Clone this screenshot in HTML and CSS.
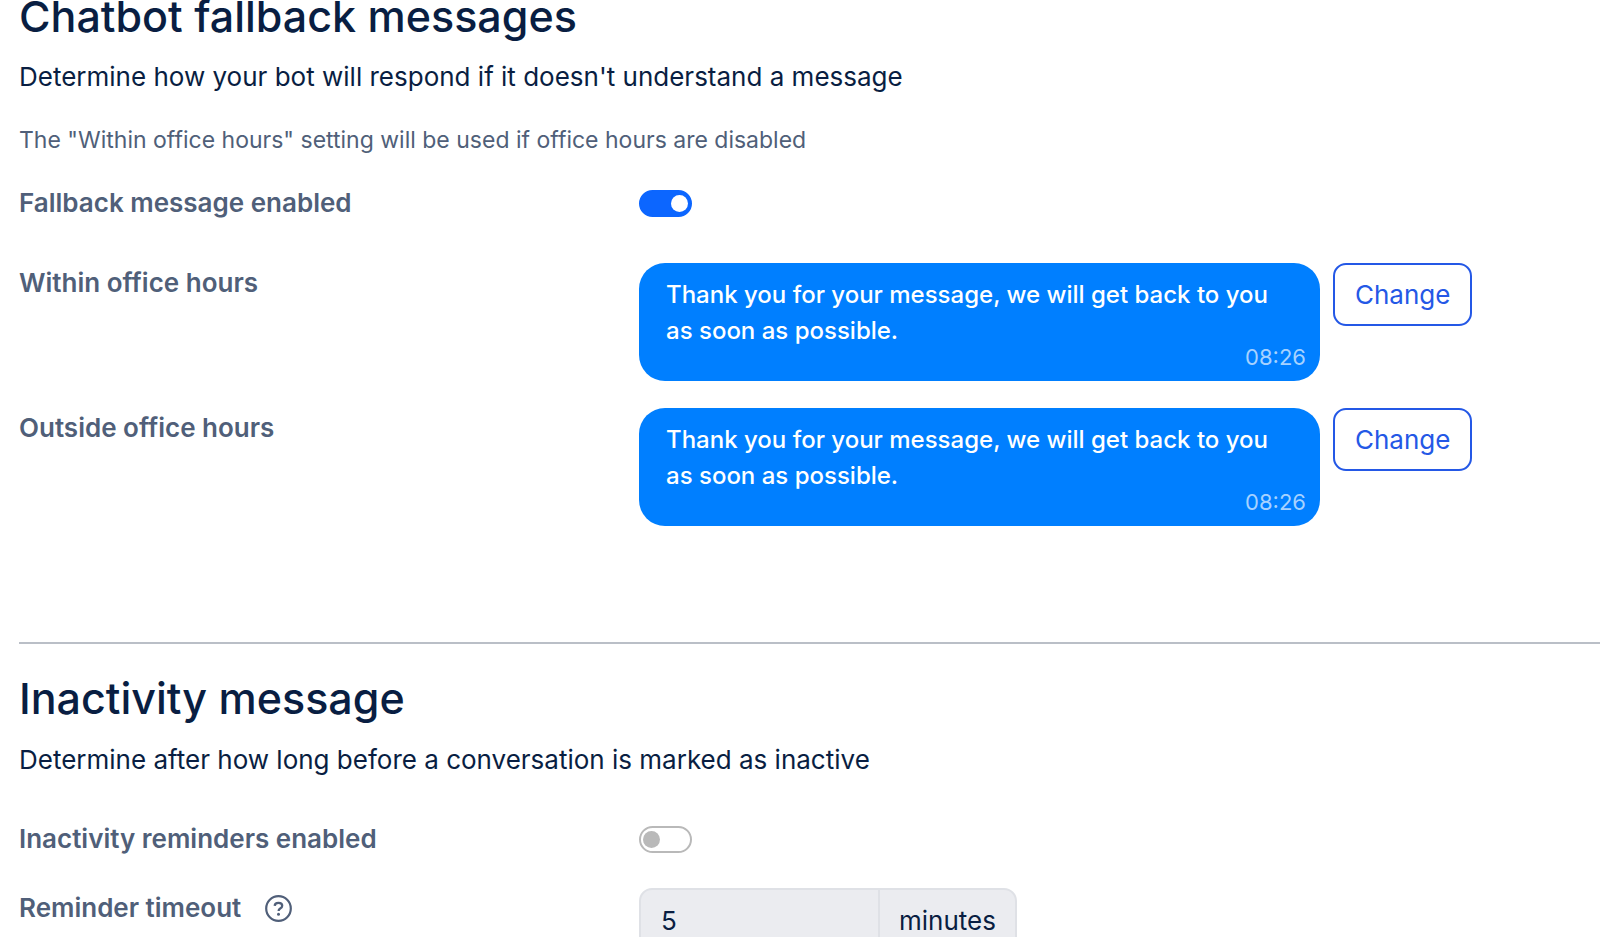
FILE: index.html
```html
<!DOCTYPE html>
<html lang="en">
<head>
<meta charset="utf-8">
<title>Chatbot settings</title>
<link rel="stylesheet" href="styles.css">
</head>
<body>
<main class="settings">
  <section class="section section-fallback">
    <h2 class="title">Chatbot fallback messages</h2>
    <p class="description">Determine how your bot will respond if it doesn't understand a message</p>
    <p class="note">The "Within office hours" setting will be used if office hours are disabled</p>
    <div class="row row-toggle">
      <label class="label" for="fallback">Fallback message enabled</label>
      <input class="toggle" id="fallback" type="checkbox" role="switch" checked>
    </div>
    <div class="row row-message">
      <span class="label">Within office hours</span>
      <div class="message">
        <div class="bubble">
          <p class="bubble-text">Thank you for your message, we will get back to you as soon as possible.</p>
          <time class="bubble-time">08:26</time>
        </div>
        <button class="change" type="button">Change</button>
      </div>
    </div>
    <div class="row row-message">
      <span class="label">Outside office hours</span>
      <div class="message">
        <div class="bubble">
          <p class="bubble-text">Thank you for your message, we will get back to you as soon as possible.</p>
          <time class="bubble-time">08:26</time>
        </div>
        <button class="change" type="button">Change</button>
      </div>
    </div>
  </section>
  <section class="section section-inactivity">
    <h2 class="title">Inactivity message</h2>
    <p class="description">Determine after how long before a conversation is marked as inactive</p>
    <div class="row row-toggle">
      <label class="label" for="inactivity">Inactivity reminders enabled</label>
      <input class="toggle" id="inactivity" type="checkbox" role="switch">
    </div>
    <div class="row row-timeout">
      <div class="label-group">
        <label class="label" for="timeout">Reminder timeout</label>
        <svg class="help" viewBox="0 0 27 27" fill="none" stroke="currentColor" aria-hidden="true">
          <circle cx="13.500" cy="13.500" r="12.300" stroke-width="2.200"/>
          <path d="M9.700 10.900C9.800 8.900 11.300 7.900 13.500 7.900c2.200 0 3.700 1.100 3.700 2.900 0 1.400-.8 2.100-2 2.800-1.200.7-1.600 1.200-1.600 2.300" stroke-width="2.300"/>
          <circle cx="13.500" cy="19.200" r="1.500" fill="currentColor" stroke="none"/>
        </svg>
      </div>
      <div class="duration">
        <input class="duration-value" id="timeout" type="text" value="5" disabled>
        <span class="duration-unit">minutes</span>
      </div>
    </div>
  </section>
</main>
</body>
</html>
```
FILE: styles.css
```css
* {
  box-sizing: border-box;
}

body {
  margin: 0;
  background: #fff;
  color: #091e42;
  font-family: Inter, "Liberation Sans", sans-serif;
  font-size: 26px;
  line-height: 36px;
  height: 100vh;
  overflow: hidden;
}

.settings {
  padding-left: 19px;
}

.title,
.description,
.note,
.bubble-text {
  margin: 0;
}

.title {
  font-size: 43px;
  font-weight: 500;
  line-height: 32px;
}

.description {
  margin-top: 27px;
}

.note {
  margin-top: 27px;
  color: #505f79;
  font-size: 23px;
}

.row {
  display: grid;
  grid-template-columns: 620px 1fr;
  align-items: start;
}

.row-toggle {
  align-items: center;
  margin-top: 27px;
}

.label {
  color: #505f79;
  font-weight: 600;
}

.toggle {
  appearance: none;
  display: flex;
  align-items: center;
  width: 53px;
  height: 27px;
  margin: 0;
  padding: 0 2px;
  border: 2px solid #b9b9b9;
  border-radius: 14px;
  background: #fff;
}

.toggle::before {
  content: "";
  width: 17px;
  height: 17px;
  border-radius: 50%;
  background: #b9b9b9;
}

.toggle:checked {
  justify-content: flex-end;
  border-color: #0c66ff;
  background: #0c66ff;
}

.toggle:checked::before {
  background: #fff;
}

.row-message {
  margin-top: 27px;
}

.row-message .label {
  padding-top: 2px;
}

.row-toggle + .row-message {
  margin-top: 42px;
}

.message {
  display: flex;
  align-items: flex-start;
  gap: 13px;
}

.bubble {
  display: flex;
  flex-direction: column;
  width: 681px;
  padding: 14px 14px 16px 27px;
  border-radius: 26px;
  background: #007fff;
  color: #fff;
}

.bubble-text {
  padding-right: 13px;
  font-size: 24px;
  font-weight: 500;
}

.bubble-time {
  align-self: flex-end;
  color: #a6d2ff;
  font-size: 22px;
  line-height: 16px;
}

.change {
  height: 63px;
  padding: 0 20px;
  border: 2px solid #2458e6;
  border-radius: 13px;
  background: #fff;
  color: #2458e6;
  font: inherit;
}

.section-inactivity {
  margin-top: 116px;
  padding-top: 38px;
  border-top: 2px solid #babfc7;
}

.section-inactivity .description {
  margin-top: 28px;
}

.section-inactivity .row-toggle {
  margin-top: 43px;
}

.row-timeout {
  margin-top: 31px;
}

.label-group {
  display: flex;
  align-items: center;
  gap: 24px;
  padding-top: 2px;
}

.help {
  width: 27px;
  height: 27px;
  color: #505f79;
}

.duration {
  display: flex;
  width: 378px;
  height: 66px;
  border: 2px solid #dfe1e6;
  border-radius: 13px;
  background: #ebecf0;
}

.duration-value {
  flex: 1;
  min-width: 0;
  padding: 0 20px;
  border: 0;
  border-right: 2px solid #dfe1e6;
  background: none;
  color: inherit;
  font: inherit;
}

.duration-unit {
  display: flex;
  align-items: center;
  padding: 0 19px;
}
```
